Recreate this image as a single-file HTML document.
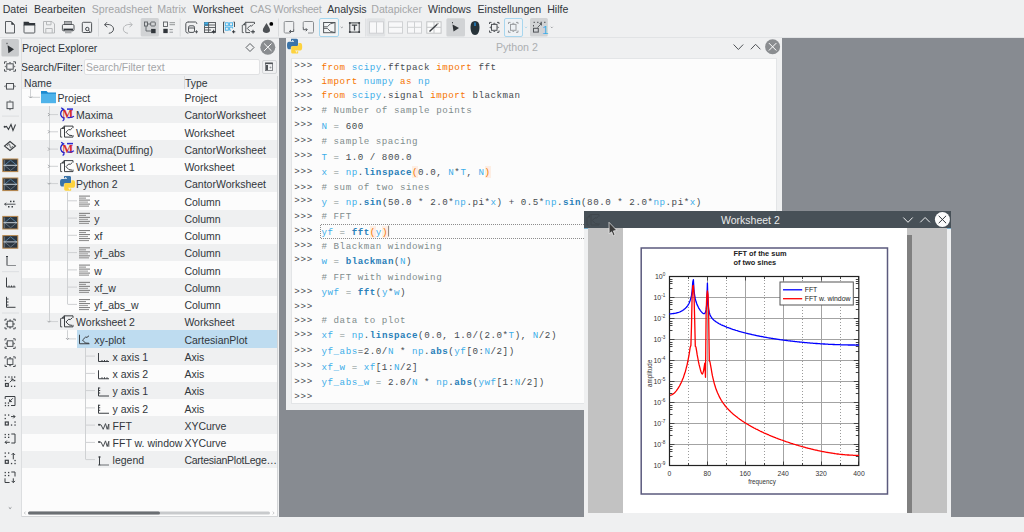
<!DOCTYPE html>
<html><head><meta charset="utf-8"><style>
*{margin:0;padding:0;box-sizing:border-box}
html,body{width:1024px;height:532px;overflow:hidden;background:#eff0f1;font-family:"Liberation Sans",sans-serif;color:#31363b}
.a{position:absolute}
.t{position:absolute;white-space:pre;line-height:1}
.m{font-size:10.6px}
.dis{color:#a4a6a8}
.code{font-family:"Liberation Mono",monospace;font-size:9.2px;letter-spacing:0.52px;white-space:pre;position:absolute;line-height:1}
.K{color:#f67400}
.V{color:#3daee9}
.F{color:#2980b9;font-weight:bold}
.C{color:#7f8c8d}
.O{color:#7f8c8d}
.D{color:#464b50}
.H{background:#fdeee4;padding-top:1px}
.tree{font-size:10.5px}
svg{position:absolute;overflow:visible}
</style></head>
<body>
<div class="t m" style="left:2.7px;top:4.2px;">Datei</div>
<div class="t m" style="left:34.1px;top:4.2px;">Bearbeiten</div>
<div class="t m dis" style="left:91.8px;top:4.2px;">Spreadsheet</div>
<div class="t m dis" style="left:157.2px;top:4.2px;">Matrix</div>
<div class="t m" style="left:193.0px;top:4.2px;">Worksheet</div>
<div class="t m dis" style="left:250.1px;top:4.2px;letter-spacing:-0.3px">CAS Worksheet</div>
<div class="t m" style="left:327.2px;top:4.2px;">Analysis</div>
<div class="t m dis" style="left:371.3px;top:4.2px;">Datapicker</div>
<div class="t m" style="left:428.1px;top:4.2px;">Windows</div>
<div class="t m" style="left:477.5px;top:4.2px;">Einstellungen</div>
<div class="t m" style="left:547.2px;top:4.2px;">Hilfe</div>
<div class="a" style="left:0;top:37px;width:1024px;height:1px;background:#e1e3e5"></div>
<div class="a" style="left:279px;top:38px;width:745px;height:479px;background:#878b91"></div>
<div class="a" style="left:286px;top:38px;width:496px;height:372px;background:#eff0f1"></div>
<div class="a" style="left:291px;top:58px;width:486px;height:346px;background:#fcfcfc;border:1px solid #e3e5e7"></div>
<div class="t" style="left:496px;top:42px;font-size:10.6px;color:#acafb2">Python 2</div>
<div class="code" style="left:294.2px;top:61.1px;color:#464b50;letter-spacing:0.75px">&gt;&gt;&gt;</div>
<div class="code D" style="left:321.5px;top:62.8px"><span class="K">from</span> <span class="V">scipy</span>.fftpack <span class="K">import</span> fft</div>
<div class="code" style="left:294.2px;top:76.7px;color:#464b50;letter-spacing:0.75px">&gt;&gt;&gt;</div>
<div class="code D" style="left:321.5px;top:76.9px"><span class="K">import</span> <span class="V">numpy</span> <span class="K">as</span> <span class="V">np</span></div>
<div class="code" style="left:294.2px;top:90.7px;color:#464b50;letter-spacing:0.75px">&gt;&gt;&gt;</div>
<div class="code D" style="left:321.5px;top:90.7px"><span class="K">from</span> <span class="V">scipy</span>.signal <span class="K">import</span> blackman</div>
<div class="code" style="left:294.2px;top:104.5px;color:#464b50;letter-spacing:0.75px">&gt;&gt;&gt;</div>
<div class="code D" style="left:321.5px;top:105.8px"><span class="C"># Number of sample points</span></div>
<div class="code" style="left:294.2px;top:119.6px;color:#464b50;letter-spacing:0.75px">&gt;&gt;&gt;</div>
<div class="code D" style="left:321.5px;top:121.5px"><span class="V">N</span><span class="O"> = </span>600</div>
<div class="code" style="left:294.2px;top:135.8px;color:#464b50;letter-spacing:0.75px">&gt;&gt;&gt;</div>
<div class="code D" style="left:321.5px;top:137.2px"><span class="C"># sample spacing</span></div>
<div class="code" style="left:294.2px;top:151.4px;color:#464b50;letter-spacing:0.75px">&gt;&gt;&gt;</div>
<div class="code D" style="left:321.5px;top:152.5px"><span class="V">T</span><span class="O"> = </span>1.0 / 800.0</div>
<div class="code" style="left:294.2px;top:167.0px;color:#464b50;letter-spacing:0.75px">&gt;&gt;&gt;</div>
<div class="code D" style="left:321.5px;top:168.4px"><span class="V">x</span><span class="O"> = </span><span class="V">np</span>.<span class="F">linspace</span><span class="K H">(</span>0.0, <span class="V">N</span>*<span class="V">T</span>, <span class="V">N</span><span class="K H">)</span></div>
<div class="code" style="left:294.2px;top:182.7px;color:#464b50;letter-spacing:0.75px">&gt;&gt;&gt;</div>
<div class="code D" style="left:321.5px;top:182.5px"><span class="C"># sum of two sines</span></div>
<div class="code" style="left:294.2px;top:196.4px;color:#464b50;letter-spacing:0.75px">&gt;&gt;&gt;</div>
<div class="code D" style="left:321.5px;top:197.5px"><span class="V">y</span><span class="O"> = </span><span class="V">np</span>.<span class="F">sin</span>(50.0 * 2.0*<span class="V">np</span>.pi*<span class="V">x</span>) + 0.5*<span class="V">np</span>.<span class="F">sin</span>(80.0 * 2.0*<span class="V">np</span>.pi*<span class="V">x</span>)</div>
<div class="code" style="left:294.2px;top:211.7px;color:#464b50;letter-spacing:0.75px">&gt;&gt;&gt;</div>
<div class="code D" style="left:321.5px;top:211.9px"><span class="C"># FFT</span></div>
<div class="code" style="left:294.2px;top:225.8px;color:#464b50;letter-spacing:0.75px">&gt;&gt;&gt;</div>
<div class="code D" style="left:321.5px;top:227.5px"><span class="V">yf</span><span class="O"> = </span><span class="F">fft</span><span class="K H">(</span><span class="V">y</span><span class="K H">)</span></div>
<div class="code" style="left:294.2px;top:241.4px;color:#464b50;letter-spacing:0.75px">&gt;&gt;&gt;</div>
<div class="code D" style="left:321.5px;top:241.6px"><span class="C"># Blackman windowing</span></div>
<div class="code" style="left:294.2px;top:255.0px;color:#464b50;letter-spacing:0.75px">&gt;&gt;&gt;</div>
<div class="code D" style="left:321.5px;top:256.9px"><span class="V">w</span><span class="O"> = </span><span class="F">blackman</span>(<span class="V">N</span>)</div>
<div class="code D" style="left:321.5px;top:272.5px"><span class="C"># FFT with windowing</span></div>
<div class="code" style="left:294.2px;top:286.7px;color:#464b50;letter-spacing:0.75px">&gt;&gt;&gt;</div>
<div class="code D" style="left:321.5px;top:287.6px"><span class="V">ywf</span><span class="O"> = </span><span class="F">fft</span>(<span class="V">y</span>*<span class="V">w</span>)</div>
<div class="code" style="left:294.2px;top:302.4px;color:#464b50;letter-spacing:0.75px">&gt;&gt;&gt;</div>
<div class="code" style="left:294.2px;top:315.9px;color:#464b50;letter-spacing:0.75px">&gt;&gt;&gt;</div>
<div class="code D" style="left:321.5px;top:315.8px"><span class="C"># data to plot</span></div>
<div class="code" style="left:294.2px;top:330.0px;color:#464b50;letter-spacing:0.75px">&gt;&gt;&gt;</div>
<div class="code D" style="left:321.5px;top:330.9px"><span class="V">xf</span><span class="O"> = </span><span class="V">np</span>.<span class="F">linspace</span>(0.0, 1.0/(2.0*<span class="V">T</span>), <span class="V">N</span>/2)</div>
<div class="code" style="left:294.2px;top:345.6px;color:#464b50;letter-spacing:0.75px">&gt;&gt;&gt;</div>
<div class="code D" style="left:321.5px;top:346.6px"><span class="V">yf_abs</span>=2.0/<span class="V">N</span> * <span class="V">np</span>.<span class="F">abs</span>(<span class="V">yf</span>[0:<span class="V">N</span>/2])</div>
<div class="code" style="left:294.2px;top:361.1px;color:#464b50;letter-spacing:0.75px">&gt;&gt;&gt;</div>
<div class="code D" style="left:321.5px;top:362.5px"><span class="V">xf_w</span><span class="O"> = </span><span class="V">xf</span>[1:<span class="V">N</span>/2]</div>
<div class="code" style="left:294.2px;top:376.7px;color:#464b50;letter-spacing:0.75px">&gt;&gt;&gt;</div>
<div class="code D" style="left:321.5px;top:378.1px"><span class="V">yf_abs_w</span><span class="O"> = </span>2.0/<span class="V">N</span> * <span class="V">np</span>.<span class="F">abs</span>(<span class="V">ywf</span>[1:<span class="V">N</span>/2])</div>
<div class="code" style="left:294.2px;top:392.4px;color:#464b50;letter-spacing:0.75px">&gt;&gt;&gt;</div>
<svg class="a" width="1024" height="532" style="left:0;top:0"><path d="M320.5,224.5 H600 M320.5,238.5 H600 M320.5,224.5 V238.5" stroke="#8d8d8d" stroke-width="1" stroke-dasharray="1,1" fill="none" shape-rendering="crispEdges"/><line x1="388.6" y1="225.7" x2="388.6" y2="236.6" stroke="#8a7f7a" stroke-width="1"/></svg>
<svg class="a" width="1024" height="532" style="left:0;top:0"><path d="M733.6,44.5 L738.4,49.5 L743.2,44.5" fill="none" stroke="#4f5357" stroke-width="1"/><path d="M750.8,49.3 L755.6,44.3 L760.4,49.3" fill="none" stroke="#4f5357" stroke-width="1"/><circle cx="772.6" cy="46.8" r="7.5" fill="#8a8d90"/><path d="M768.9,43.1 L776.3,50.5 M776.3,43.1 L768.9,50.5" stroke="#fff" stroke-width="1"/><g transform="translate(287.00,38.80)"><path d="M4.5,0 H9.5 C10.5,0 11,0.7 11,1.7 V6 C11,7 10.3,7.6 9.3,7.6 H5 C4,7.6 3.8,8.3 3.8,9 V10.5 H1.8 C0.5,10.5 0,9 0,6.5 C0,4 0.7,3 2,3 H7 V2.3 H4 V1.5 C4,0.5 4,0 4.5,0 Z" fill="#3a73a8"/><path d="M10.7,14.8 H5.7 C4.7,14.8 4.2,14.1 4.2,13.1 V8.8 C4.2,7.8 4.9,7.2 5.9,7.2 H10.2 C11.2,7.2 11.4,6.5 11.4,5.8 V4.3 H13.4 C14.7,4.3 15.2,5.8 15.2,8.3 C15.2,10.8 14.5,11.8 13.2,11.8 H8.2 V12.5 H11.2 V13.3 C11.2,14.3 11.2,14.8 10.7,14.8 Z" fill="#fdd23e"/><circle cx="5.7" cy="1.8" r="0.6" fill="#fff"/><circle cx="9.6" cy="13" r="0.6" fill="#fff"/></g></svg>
<div class="a" style="left:584px;top:211px;width:367px;height:306px;background:#eff0f1"></div>
<div class="a" style="left:584px;top:211px;width:367px;height:18px;background:#475057;border-bottom:1px solid #7db2cf"></div>
<div class="t" style="left:721px;top:214.5px;font-size:10.5px;color:#e8e9ea">Worksheet 2</div>
<div class="a" style="left:588px;top:228px;width:359px;height:285px;background:#c2c2c2"></div>
<div class="a" style="left:623px;top:228px;width:284px;height:285px;background:#ffffff"></div>
<div class="a" style="left:907px;top:235px;width:5px;height:278px;background:#808080"></div>
<svg class="a" width="1024" height="532" style="left:0;top:0"><path d="M903.3,217.5 L908,222.3 L912.7,217.5" fill="none" stroke="#eff0f1" stroke-width="1"/><path d="M920.3,222.3 L925.1,217.5 L929.9,222.3" fill="none" stroke="#eff0f1" stroke-width="1"/><circle cx="942.4" cy="219.5" r="7.5" fill="#fcfcfc"/><path d="M938.7,215.8 L946.1,223.2 M946.1,215.8 L938.7,223.2" stroke="#31363b" stroke-width="1"/><rect x="641.2" y="248" width="246.3" height="246" fill="none" stroke="#5b5a7d" stroke-width="1.5"/><line x1="669.3" y1="297.5" x2="859.0" y2="297.5" stroke="#a3a3a3" stroke-width="1"/><line x1="669.3" y1="318.5" x2="859.0" y2="318.5" stroke="#a3a3a3" stroke-width="1"/><line x1="669.3" y1="339.5" x2="859.0" y2="339.5" stroke="#a3a3a3" stroke-width="1"/><line x1="669.3" y1="360.5" x2="859.0" y2="360.5" stroke="#a3a3a3" stroke-width="1"/><line x1="669.3" y1="381.5" x2="859.0" y2="381.5" stroke="#a3a3a3" stroke-width="1"/><line x1="669.3" y1="402.5" x2="859.0" y2="402.5" stroke="#a3a3a3" stroke-width="1"/><line x1="669.3" y1="423.5" x2="859.0" y2="423.5" stroke="#a3a3a3" stroke-width="1"/><line x1="669.3" y1="444.5" x2="859.0" y2="444.5" stroke="#a3a3a3" stroke-width="1"/><line x1="688.5" y1="276.6" x2="688.5" y2="465.3" stroke="#9a9a9a" stroke-width="1" stroke-dasharray="1,2" shape-rendering="crispEdges"/><line x1="707.5" y1="276.6" x2="707.5" y2="465.3" stroke="#a3a3a3" stroke-width="1"/><line x1="726.5" y1="276.6" x2="726.5" y2="465.3" stroke="#9a9a9a" stroke-width="1" stroke-dasharray="1,2" shape-rendering="crispEdges"/><line x1="745.5" y1="276.6" x2="745.5" y2="465.3" stroke="#a3a3a3" stroke-width="1"/><line x1="764.5" y1="276.6" x2="764.5" y2="465.3" stroke="#9a9a9a" stroke-width="1" stroke-dasharray="1,2" shape-rendering="crispEdges"/><line x1="783.5" y1="276.6" x2="783.5" y2="465.3" stroke="#a3a3a3" stroke-width="1"/><line x1="802.5" y1="276.6" x2="802.5" y2="465.3" stroke="#9a9a9a" stroke-width="1" stroke-dasharray="1,2" shape-rendering="crispEdges"/><line x1="821.5" y1="276.6" x2="821.5" y2="465.3" stroke="#a3a3a3" stroke-width="1"/><line x1="840.5" y1="276.6" x2="840.5" y2="465.3" stroke="#9a9a9a" stroke-width="1" stroke-dasharray="1,2" shape-rendering="crispEdges"/><path d="M669.5,288.5 h3 M858.8,288.5 h-3 M669.5,283.5 h3 M858.8,283.5 h-3 M669.5,281.5 h3 M858.8,281.5 h-3 M669.5,279.5 h3 M858.8,279.5 h-3 M669.5,309.5 h3 M858.8,309.5 h-3 M669.5,304.5 h3 M858.8,304.5 h-3 M669.5,302.5 h3 M858.8,302.5 h-3 M669.5,300.5 h3 M858.8,300.5 h-3 M669.5,330.5 h3 M858.8,330.5 h-3 M669.5,325.5 h3 M858.8,325.5 h-3 M669.5,323.5 h3 M858.8,323.5 h-3 M669.5,321.5 h3 M858.8,321.5 h-3 M669.5,351.5 h3 M858.8,351.5 h-3 M669.5,346.5 h3 M858.8,346.5 h-3 M669.5,344.5 h3 M858.8,344.5 h-3 M669.5,342.5 h3 M858.8,342.5 h-3 M669.5,372.5 h3 M858.8,372.5 h-3 M669.5,367.5 h3 M858.8,367.5 h-3 M669.5,365.5 h3 M858.8,365.5 h-3 M669.5,363.5 h3 M858.8,363.5 h-3 M669.5,393.5 h3 M858.8,393.5 h-3 M669.5,388.5 h3 M858.8,388.5 h-3 M669.5,386.5 h3 M858.8,386.5 h-3 M669.5,384.5 h3 M858.8,384.5 h-3 M669.5,414.5 h3 M858.8,414.5 h-3 M669.5,409.5 h3 M858.8,409.5 h-3 M669.5,407.5 h3 M858.8,407.5 h-3 M669.5,405.5 h3 M858.8,405.5 h-3 M669.5,435.5 h3 M858.8,435.5 h-3 M669.5,430.5 h3 M858.8,430.5 h-3 M669.5,428.5 h3 M858.8,428.5 h-3 M669.5,426.5 h3 M858.8,426.5 h-3 M669.5,456.5 h3 M858.8,456.5 h-3 M669.5,451.5 h3 M858.8,451.5 h-3 M669.5,449.5 h3 M858.8,449.5 h-3 M669.5,446.5 h3 M858.8,446.5 h-3 M669.5,276.5 h5 M858.8,276.5 h-5 M669.5,297.5 h5 M858.8,297.5 h-5 M669.5,318.5 h5 M858.8,318.5 h-5 M669.5,339.5 h5 M858.8,339.5 h-5 M669.5,360.5 h5 M858.8,360.5 h-5 M669.5,381.5 h5 M858.8,381.5 h-5 M669.5,402.5 h5 M858.8,402.5 h-5 M669.5,423.5 h5 M858.8,423.5 h-5 M669.5,444.5 h5 M858.8,444.5 h-5 M669.5,465.5 h5 M858.8,465.5 h-5 M669.5,465.5 v-4 M669.5,276.5 v4 M688.5,465.5 v-2.5 M688.5,276.5 v2.5 M707.5,465.5 v-4 M707.5,276.5 v4 M726.5,465.5 v-2.5 M726.5,276.5 v2.5 M745.5,465.5 v-4 M745.5,276.5 v4 M764.5,465.5 v-2.5 M764.5,276.5 v2.5 M783.5,465.5 v-4 M783.5,276.5 v4 M802.5,465.5 v-2.5 M802.5,276.5 v2.5 M821.5,465.5 v-4 M821.5,276.5 v4 M840.5,465.5 v-2.5 M840.5,276.5 v2.5 M858.5,465.5 v-4 M858.5,276.5 v4" stroke="#444" stroke-width="1" fill="none"/><rect x="669.5" y="276.5" width="189.3" height="189" fill="none" stroke="#222" stroke-width="1.2"/><path d="M669.3,313.8 L669.9,313.8 L670.6,313.8 L671.2,313.8 L671.8,313.7 L672.5,313.7 L673.1,313.6 L673.7,313.5 L674.4,313.4 L675.0,313.3 L675.6,313.2 L676.3,313.0 L676.9,312.9 L677.5,312.7 L678.2,312.5 L678.8,312.3 L679.5,312.0 L680.1,311.8 L680.7,311.5 L681.4,311.2 L682.0,310.8 L682.6,310.5 L683.3,310.0 L683.9,309.6 L684.5,309.1 L685.2,308.5 L685.8,307.9 L686.4,307.3 L687.1,306.5 L687.7,305.6 L688.3,304.6 L689.0,303.5 L689.6,302.1 L690.2,300.4 L690.9,298.3 L691.5,295.4 L692.1,291.1 L692.8,281.9 L693.4,279.7 L694.0,290.7 L694.7,295.6 L695.3,298.9 L695.9,301.3 L696.6,303.3 L697.2,304.9 L697.9,306.3 L698.5,307.6 L699.1,308.7 L699.8,309.7 L700.4,310.6 L701.0,311.4 L701.7,312.1 L702.3,312.7 L702.9,313.2 L703.6,313.6 L704.2,313.6 L704.8,313.3 L705.5,312.2 L706.1,309.9 L706.7,304.7 L707.4,283.1 L708.0,302.8 L708.6,309.1 L709.3,312.4 L709.9,314.5 L710.5,315.9 L711.2,317.0 L711.8,318.0 L712.4,318.7 L713.1,319.4 L713.7,320.0 L714.3,320.5 L715.0,321.0 L715.6,321.5 L716.2,321.9 L716.9,322.3 L717.5,322.7 L718.2,323.1 L718.8,323.5 L719.4,323.8 L720.1,324.1 L720.7,324.5 L721.3,324.8 L722.0,325.1 L722.6,325.4 L723.2,325.7 L723.9,325.9 L724.5,326.2 L725.1,326.5 L725.8,326.7 L726.4,327.0 L727.0,327.3 L727.7,327.5 L728.3,327.7 L728.9,328.0 L729.6,328.2 L730.2,328.4 L730.8,328.7 L731.5,328.9 L732.1,329.1 L732.7,329.3 L733.4,329.5 L734.0,329.7 L734.6,329.9 L735.3,330.1 L735.9,330.3 L736.6,330.5 L737.2,330.7 L737.8,330.9 L738.5,331.1 L739.1,331.3 L739.7,331.5 L740.4,331.7 L741.0,331.8 L741.6,332.0 L742.3,332.2 L742.9,332.3 L743.5,332.5 L744.2,332.7 L744.8,332.8 L745.4,333.0 L746.1,333.2 L746.7,333.3 L747.3,333.5 L748.0,333.6 L748.6,333.8 L749.2,333.9 L749.9,334.1 L750.5,334.2 L751.1,334.4 L751.8,334.5 L752.4,334.7 L753.0,334.8 L753.7,334.9 L754.3,335.1 L755.0,335.2 L755.6,335.4 L756.2,335.5 L756.9,335.6 L757.5,335.8 L758.1,335.9 L758.8,336.0 L759.4,336.1 L760.0,336.3 L760.7,336.4 L761.3,336.5 L761.9,336.6 L762.6,336.7 L763.2,336.9 L763.8,337.0 L764.5,337.1 L765.1,337.2 L765.7,337.3 L766.4,337.4 L767.0,337.6 L767.6,337.7 L768.3,337.8 L768.9,337.9 L769.5,338.0 L770.2,338.1 L770.8,338.2 L771.4,338.3 L772.1,338.4 L772.7,338.5 L773.3,338.6 L774.0,338.7 L774.6,338.8 L775.3,338.9 L775.9,339.0 L776.5,339.1 L777.2,339.2 L777.8,339.3 L778.4,339.4 L779.1,339.5 L779.7,339.6 L780.3,339.7 L781.0,339.8 L781.6,339.8 L782.2,339.9 L782.9,340.0 L783.5,340.1 L784.1,340.2 L784.8,340.3 L785.4,340.4 L786.0,340.4 L786.7,340.5 L787.3,340.6 L787.9,340.7 L788.6,340.8 L789.2,340.8 L789.8,340.9 L790.5,341.0 L791.1,341.1 L791.7,341.1 L792.4,341.2 L793.0,341.3 L793.7,341.4 L794.3,341.4 L794.9,341.5 L795.6,341.6 L796.2,341.7 L796.8,341.7 L797.5,341.8 L798.1,341.9 L798.7,341.9 L799.4,342.0 L800.0,342.1 L800.6,342.1 L801.3,342.2 L801.9,342.2 L802.5,342.3 L803.2,342.4 L803.8,342.4 L804.4,342.5 L805.1,342.6 L805.7,342.6 L806.3,342.7 L807.0,342.7 L807.6,342.8 L808.2,342.8 L808.9,342.9 L809.5,342.9 L810.1,343.0 L810.8,343.1 L811.4,343.1 L812.1,343.2 L812.7,343.2 L813.3,343.3 L814.0,343.3 L814.6,343.4 L815.2,343.4 L815.9,343.5 L816.5,343.5 L817.1,343.5 L817.8,343.6 L818.4,343.6 L819.0,343.7 L819.7,343.7 L820.3,343.8 L820.9,343.8 L821.6,343.8 L822.2,343.9 L822.8,343.9 L823.5,344.0 L824.1,344.0 L824.7,344.0 L825.4,344.1 L826.0,344.1 L826.6,344.2 L827.3,344.2 L827.9,344.2 L828.5,344.3 L829.2,344.3 L829.8,344.3 L830.4,344.4 L831.1,344.4 L831.7,344.4 L832.4,344.4 L833.0,344.5 L833.6,344.5 L834.3,344.5 L834.9,344.6 L835.5,344.6 L836.2,344.6 L836.8,344.6 L837.4,344.7 L838.1,344.7 L838.7,344.7 L839.3,344.7 L840.0,344.7 L840.6,344.8 L841.2,344.8 L841.9,344.8 L842.5,344.8 L843.1,344.8 L843.8,344.9 L844.4,344.9 L845.0,344.9 L845.7,344.9 L846.3,344.9 L846.9,344.9 L847.6,344.9 L848.2,345.0 L848.8,345.0 L849.5,345.0 L850.1,345.0 L850.8,345.0 L851.4,345.0 L852.0,345.0 L852.7,345.0 L853.3,345.0 L853.9,345.0 L854.6,345.0 L855.2,345.1 L855.8,345.1 L856.5,345.1 L857.1,345.1 L857.7,345.1 L858.4,345.1 L859.0,345.1" fill="none" stroke="#0000ff" stroke-width="1.3" stroke-linejoin="round"/><path d="M669.9,395.3 L670.6,395.2 L671.2,395.0 L671.8,394.8 L672.5,394.4 L673.1,394.0 L673.7,393.5 L674.4,393.0 L675.0,392.3 L675.6,391.6 L676.3,390.9 L676.9,390.0 L677.5,389.2 L678.2,388.2 L678.8,387.1 L679.5,386.0 L680.1,384.9 L680.7,383.6 L681.4,382.2 L682.0,380.8 L682.6,379.3 L683.3,377.7 L683.9,375.9 L684.5,374.0 L685.2,372.0 L685.8,369.8 L686.4,367.4 L687.1,364.8 L687.7,362.0 L688.3,358.8 L689.0,355.2 L689.6,351.3 L690.2,347.2 L690.9,345.4 L691.5,326.1 L692.1,296.6 L692.8,286.0 L693.4,285.4 L694.0,294.6 L694.7,320.2 L695.3,346.3 L695.9,346.9 L696.6,350.9 L697.2,354.9 L697.9,358.5 L698.5,361.8 L699.1,364.7 L699.8,367.3 L700.4,369.7 L701.0,371.8 L701.7,373.4 L702.3,374.1 L702.9,373.2 L703.6,370.6 L704.2,366.9 L704.8,363.1 L705.5,377.3 L706.1,314.9 L706.7,296.6 L707.4,290.9 L708.0,294.6 L708.6,309.7 L709.3,361.0 L709.9,361.5 L710.5,364.8 L711.2,368.7 L711.8,372.4 L712.4,375.7 L713.1,378.6 L713.7,381.2 L714.3,383.6 L715.0,385.8 L715.6,387.8 L716.2,389.6 L716.9,391.3 L717.5,392.8 L718.2,394.3 L718.8,395.6 L719.4,396.9 L720.1,398.1 L720.7,399.2 L721.3,400.3 L722.0,401.3 L722.6,402.3 L723.2,403.2 L723.9,404.1 L724.5,404.9 L725.1,405.8 L725.8,406.5 L726.4,407.3 L727.0,408.0 L727.7,408.7 L728.3,409.4 L728.9,410.1 L729.6,410.7 L730.2,411.3 L730.8,411.9 L731.5,412.5 L732.1,413.1 L732.7,413.7 L733.4,414.2 L734.0,414.8 L734.6,415.3 L735.3,415.8 L735.9,416.3 L736.6,416.8 L737.2,417.3 L737.8,417.8 L738.5,418.3 L739.1,418.7 L739.7,419.2 L740.4,419.6 L741.0,420.1 L741.6,420.5 L742.3,421.0 L742.9,421.4 L743.5,421.8 L744.2,422.2 L744.8,422.6 L745.4,423.0 L746.1,423.4 L746.7,423.8 L747.3,424.2 L748.0,424.5 L748.6,424.9 L749.2,425.3 L749.9,425.7 L750.5,426.0 L751.1,426.4 L751.8,426.7 L752.4,427.1 L753.0,427.4 L753.7,427.8 L754.3,428.1 L755.0,428.4 L755.6,428.8 L756.2,429.1 L756.9,429.4 L757.5,429.7 L758.1,430.0 L758.8,430.4 L759.4,430.7 L760.0,431.0 L760.7,431.3 L761.3,431.6 L761.9,431.9 L762.6,432.2 L763.2,432.5 L763.8,432.8 L764.5,433.1 L765.1,433.3 L765.7,433.6 L766.4,433.9 L767.0,434.2 L767.6,434.5 L768.3,434.7 L768.9,435.0 L769.5,435.3 L770.2,435.5 L770.8,435.8 L771.4,436.1 L772.1,436.3 L772.7,436.6 L773.3,436.8 L774.0,437.1 L774.6,437.4 L775.3,437.6 L775.9,437.9 L776.5,438.1 L777.2,438.3 L777.8,438.6 L778.4,438.8 L779.1,439.1 L779.7,439.3 L780.3,439.5 L781.0,439.8 L781.6,440.0 L782.2,440.2 L782.9,440.5 L783.5,440.7 L784.1,440.9 L784.8,441.1 L785.4,441.4 L786.0,441.6 L786.7,441.8 L787.3,442.0 L787.9,442.2 L788.6,442.4 L789.2,442.6 L789.8,442.9 L790.5,443.1 L791.1,443.3 L791.7,443.5 L792.4,443.7 L793.0,443.9 L793.7,444.1 L794.3,444.3 L794.9,444.5 L795.6,444.7 L796.2,444.9 L796.8,445.1 L797.5,445.2 L798.1,445.4 L798.7,445.6 L799.4,445.8 L800.0,446.0 L800.6,446.2 L801.3,446.4 L801.9,446.5 L802.5,446.7 L803.2,446.9 L803.8,447.1 L804.4,447.2 L805.1,447.4 L805.7,447.6 L806.3,447.8 L807.0,447.9 L807.6,448.1 L808.2,448.3 L808.9,448.4 L809.5,448.6 L810.1,448.7 L810.8,448.9 L811.4,449.1 L812.1,449.2 L812.7,449.4 L813.3,449.5 L814.0,449.7 L814.6,449.8 L815.2,450.0 L815.9,450.1 L816.5,450.2 L817.1,450.4 L817.8,450.5 L818.4,450.7 L819.0,450.8 L819.7,450.9 L820.3,451.1 L820.9,451.2 L821.6,451.3 L822.2,451.5 L822.8,451.6 L823.5,451.7 L824.1,451.8 L824.7,451.9 L825.4,452.1 L826.0,452.2 L826.6,452.3 L827.3,452.4 L827.9,452.5 L828.5,452.6 L829.2,452.7 L829.8,452.8 L830.4,452.9 L831.1,453.0 L831.7,453.1 L832.4,453.2 L833.0,453.3 L833.6,453.4 L834.3,453.5 L834.9,453.6 L835.5,453.7 L836.2,453.8 L836.8,453.9 L837.4,454.0 L838.1,454.0 L838.7,454.1 L839.3,454.2 L840.0,454.3 L840.6,454.3 L841.2,454.4 L841.9,454.5 L842.5,454.5 L843.1,454.6 L843.8,454.6 L844.4,454.7 L845.0,454.8 L845.7,454.8 L846.3,454.9 L846.9,454.9 L847.6,455.0 L848.2,455.0 L848.8,455.0 L849.5,455.1 L850.1,455.1 L850.8,455.2 L851.4,455.2 L852.0,455.2 L852.7,455.2 L853.3,455.3 L853.9,455.3 L854.6,455.3 L855.2,455.3 L855.8,455.3 L856.5,455.4 L857.1,455.4 L857.7,455.4 L858.4,455.4 L859.0,455.4" fill="none" stroke="#ff0000" stroke-width="1.3" stroke-linejoin="round"/><text x="665.3" y="279.2" text-anchor="end" font-family="Liberation Sans" font-size="7" fill="#333"><tspan>10</tspan><tspan dy="-2.8" font-size="4.6">0</tspan></text><text x="665.3" y="300.2" text-anchor="end" font-family="Liberation Sans" font-size="7" fill="#333"><tspan>10</tspan><tspan dy="-2.8" font-size="4.6">-1</tspan></text><text x="665.3" y="321.1" text-anchor="end" font-family="Liberation Sans" font-size="7" fill="#333"><tspan>10</tspan><tspan dy="-2.8" font-size="4.6">-2</tspan></text><text x="665.3" y="342.1" text-anchor="end" font-family="Liberation Sans" font-size="7" fill="#333"><tspan>10</tspan><tspan dy="-2.8" font-size="4.6">-3</tspan></text><text x="665.3" y="363.1" text-anchor="end" font-family="Liberation Sans" font-size="7" fill="#333"><tspan>10</tspan><tspan dy="-2.8" font-size="4.6">-4</tspan></text><text x="665.3" y="384.0" text-anchor="end" font-family="Liberation Sans" font-size="7" fill="#333"><tspan>10</tspan><tspan dy="-2.8" font-size="4.6">-5</tspan></text><text x="665.3" y="405.0" text-anchor="end" font-family="Liberation Sans" font-size="7" fill="#333"><tspan>10</tspan><tspan dy="-2.8" font-size="4.6">-6</tspan></text><text x="665.3" y="426.0" text-anchor="end" font-family="Liberation Sans" font-size="7" fill="#333"><tspan>10</tspan><tspan dy="-2.8" font-size="4.6">-7</tspan></text><text x="665.3" y="446.9" text-anchor="end" font-family="Liberation Sans" font-size="7" fill="#333"><tspan>10</tspan><tspan dy="-2.8" font-size="4.6">-8</tspan></text><text x="665.3" y="467.9" text-anchor="end" font-family="Liberation Sans" font-size="7" fill="#333"><tspan>10</tspan><tspan dy="-2.8" font-size="4.6">-9</tspan></text><text x="669.3" y="476" text-anchor="middle" font-family="Liberation Sans" font-size="6.8" fill="#333">0</text><text x="707.2" y="476" text-anchor="middle" font-family="Liberation Sans" font-size="6.8" fill="#333">80</text><text x="745.2" y="476" text-anchor="middle" font-family="Liberation Sans" font-size="6.8" fill="#333">160</text><text x="783.1" y="476" text-anchor="middle" font-family="Liberation Sans" font-size="6.8" fill="#333">240</text><text x="821.1" y="476" text-anchor="middle" font-family="Liberation Sans" font-size="6.8" fill="#333">320</text><text x="859.0" y="476" text-anchor="middle" font-family="Liberation Sans" font-size="6.8" fill="#333">400</text><text x="762" y="484" text-anchor="middle" font-family="Liberation Sans" font-size="6.3" fill="#333">frequency</text><text transform="translate(651.7,373.3) rotate(-90)" text-anchor="middle" font-family="Liberation Sans" font-size="6.3" fill="#333">amplitude</text><text x="733.5" y="255.5" font-family="Liberation Sans" font-weight="bold" font-size="7.4" fill="#222">FFT of the sum</text><text x="733.5" y="265.1" font-family="Liberation Sans" font-weight="bold" font-size="7.4" fill="#222">of two sines</text><rect x="780" y="282" width="73.3" height="23" fill="#fff" stroke="#555" stroke-width="1"/><line x1="783" y1="289.8" x2="802.2" y2="289.8" stroke="#0000ff" stroke-width="1.3"/><line x1="783" y1="298.7" x2="802.2" y2="298.7" stroke="#ff0000" stroke-width="1.3"/><text x="804.7" y="292" font-family="Liberation Sans" font-size="6.9" fill="#222">FFT</text><text x="804.7" y="301" font-family="Liberation Sans" font-size="6.9" fill="#222">FFT w. window</text><path d="M609,222.3 L616.8,230.4 L613.4,230.9 L615,235 L613.3,235.8 L611.6,231.8 L609.2,233.8 Z" fill="#3a3a3a" stroke="#f0f0f0" stroke-width="0.7" stroke-linejoin="round"/><g opacity="0.2"><path d="M587,217.5 L590,214.5 V217.5 Z" fill="#222"/><path d="M587,217.3 V225 H588.5 M590.3,214.5 H599 V216.5 M591,214.5 V225 H599 V223" fill="none" stroke="#222"/><path d="M598.3,216.5 L596.5,218 L595,217.8 L592.3,220.5 L595.3,223.5 L598,224" fill="none" stroke="#222"/></g></svg>
<div class="a" style="left:0;top:517px;width:1024px;height:15px;background:#eff0f1"></div>
<div class="t" style="left:22px;top:43.3px;font-size:10.6px">Project Explorer</div>
<div class="t" style="left:21px;top:62.5px;font-size:10.4px">Search/Filter:</div>
<div class="a" style="left:84px;top:58.6px;width:176.3px;height:16.4px;background:#fcfcfc;border:1px solid #e0e1e3;border-radius:2px"></div>
<div class="t" style="left:86px;top:63px;font-size:10.4px;color:#a4a6a8">Search/Filter text</div>
<div class="a" style="left:261.5px;top:59.5px;width:15.5px;height:14px;background:#eff0f1;border:1px solid #d5d7d9;border-radius:2px"></div>
<div class="a" style="left:21px;top:76px;width:257px;height:441px;background:#fcfcfc;border:1px solid #d3d5d7"></div>
<div class="a" style="left:22px;top:76px;width:255px;height:12.7px;background:#eff0f1"></div>
<div class="a" style="left:183.5px;top:76px;width:1px;height:12.7px;background:#d8dadc"></div>
<div class="t" style="left:24px;top:79.3px;font-size:10.4px">Name</div>
<div class="t" style="left:185px;top:79.3px;font-size:10.4px">Type</div>
<div class="a" style="left:22px;top:106px;width:255px;height:17px;background:#eff0f1"></div>
<div class="a" style="left:22px;top:140px;width:255px;height:18px;background:#eff0f1"></div>
<div class="a" style="left:22px;top:175px;width:255px;height:17px;background:#eff0f1"></div>
<div class="a" style="left:22px;top:210px;width:255px;height:17px;background:#eff0f1"></div>
<div class="a" style="left:22px;top:244px;width:255px;height:17px;background:#eff0f1"></div>
<div class="a" style="left:22px;top:278px;width:255px;height:18px;background:#eff0f1"></div>
<div class="a" style="left:22px;top:313px;width:255px;height:17px;background:#eff0f1"></div>
<div class="a" style="left:76.5px;top:330px;width:200.5px;height:18px;background:#bedcf0"></div>
<div class="a" style="left:22px;top:348px;width:255px;height:17px;background:#eff0f1"></div>
<div class="a" style="left:22px;top:382px;width:255px;height:17px;background:#eff0f1"></div>
<div class="a" style="left:22px;top:416px;width:255px;height:18px;background:#eff0f1"></div>
<div class="a" style="left:22px;top:451px;width:255px;height:17px;background:#eff0f1"></div>
<div class="t tree" style="left:57.6px;top:93.0px">Project</div>
<div class="t tree" style="left:184.4px;top:93.0px;">Project</div>
<div class="t tree" style="left:76.1px;top:110.3px">Maxima</div>
<div class="t tree" style="left:184.4px;top:110.3px;">CantorWorksheet</div>
<div class="t tree" style="left:76.1px;top:127.5px">Worksheet</div>
<div class="t tree" style="left:184.4px;top:127.5px;">Worksheet</div>
<div class="t tree" style="left:76.1px;top:144.8px">Maxima(Duffing)</div>
<div class="t tree" style="left:184.4px;top:144.8px;">CantorWorksheet</div>
<div class="t tree" style="left:76.1px;top:162.1px">Worksheet 1</div>
<div class="t tree" style="left:184.4px;top:162.1px;">Worksheet</div>
<div class="t tree" style="left:76.1px;top:179.3px">Python 2</div>
<div class="t tree" style="left:184.4px;top:179.3px;">CantorWorksheet</div>
<div class="t tree" style="left:94.2px;top:196.6px">x</div>
<div class="t tree" style="left:184.4px;top:196.6px;">Column</div>
<div class="t tree" style="left:94.2px;top:213.8px">y</div>
<div class="t tree" style="left:184.4px;top:213.8px;">Column</div>
<div class="t tree" style="left:94.2px;top:231.1px">xf</div>
<div class="t tree" style="left:184.4px;top:231.1px;">Column</div>
<div class="t tree" style="left:94.2px;top:248.3px">yf_abs</div>
<div class="t tree" style="left:184.4px;top:248.3px;">Column</div>
<div class="t tree" style="left:94.2px;top:265.6px">w</div>
<div class="t tree" style="left:184.4px;top:265.6px;">Column</div>
<div class="t tree" style="left:94.2px;top:282.8px">xf_w</div>
<div class="t tree" style="left:184.4px;top:282.8px;">Column</div>
<div class="t tree" style="left:94.2px;top:300.1px">yf_abs_w</div>
<div class="t tree" style="left:184.4px;top:300.1px;">Column</div>
<div class="t tree" style="left:76.1px;top:317.3px">Worksheet 2</div>
<div class="t tree" style="left:184.4px;top:317.3px;">Worksheet</div>
<div class="t tree" style="left:94.2px;top:334.6px">xy-plot</div>
<div class="t tree" style="left:184.4px;top:334.6px;">CartesianPlot</div>
<div class="t tree" style="left:112.6px;top:351.8px">x axis 1</div>
<div class="t tree" style="left:184.4px;top:351.8px;">Axis</div>
<div class="t tree" style="left:112.6px;top:369.1px">x axis 2</div>
<div class="t tree" style="left:184.4px;top:369.1px;">Axis</div>
<div class="t tree" style="left:112.6px;top:386.3px">y axis 1</div>
<div class="t tree" style="left:184.4px;top:386.3px;">Axis</div>
<div class="t tree" style="left:112.6px;top:403.6px">y axis 2</div>
<div class="t tree" style="left:184.4px;top:403.6px;">Axis</div>
<div class="t tree" style="left:112.6px;top:420.8px">FFT</div>
<div class="t tree" style="left:184.4px;top:420.8px;">XYCurve</div>
<div class="t tree" style="left:112.6px;top:438.1px">FFT w. window</div>
<div class="t tree" style="left:184.4px;top:438.1px;">XYCurve</div>
<div class="t tree" style="left:112.6px;top:455.3px">legend</div>
<div class="t tree" style="left:184.4px;top:455.3px;letter-spacing:-0.25px">CartesianPlotLege…</div>
<svg class="a" width="1024" height="532" style="left:0;top:0"><g transform="translate(41.00,89.90)"><path d="M0,1 H5.5 L7,2.5 H15 V4.5 H0 Z" fill="#1b8ad0"/><rect x="0" y="3.8" width="15" height="9.5" fill="#4fb3ea"/></g><g transform="translate(60.00,107.50)"><text x="2.2" y="10.8" font-family="Liberation Serif" font-weight="bold" font-size="11.5" fill="#d42a2a">M</text><path d="M1.2,0.3 L3.6,1.9 C1.3,3 0.4,5 0.8,7.4 C1.2,9.8 3,10.3 4,10.8 C4.2,12 3.6,13 2.6,13.4" fill="none" stroke="#2222cc" stroke-width="1.3"/><path d="M7,1.6 H13" stroke="#2a2ad0" stroke-width="1.5"/><path d="M7.5,10 C10,10.3 12,10.2 14,8.8" fill="none" stroke="#2a2ad0" stroke-width="1.3"/></g><g transform="translate(60.00,125.60)"><path d="M0.6,3.3 L3.9,0.3 V3.3 Z" fill="#3b3f43"/><path d="M0.6,3 V11.5 H2.2" fill="none" stroke="#3b3f43" stroke-width="0.9"/><path d="M3.8,0.5 H13 V2.5 M4.5,0.5 V11.5 H13 V9.5" fill="none" stroke="#3b3f43"/><path d="M12.2,2.5 L10.3,4.2 L8.7,3.9 L6,6.6 L9,9.6 L12,10" fill="none" stroke="#3b3f43" stroke-width="1"/></g><g transform="translate(60.00,142.00)"><text x="2.2" y="10.8" font-family="Liberation Serif" font-weight="bold" font-size="11.5" fill="#d42a2a">M</text><path d="M1.2,0.3 L3.6,1.9 C1.3,3 0.4,5 0.8,7.4 C1.2,9.8 3,10.3 4,10.8 C4.2,12 3.6,13 2.6,13.4" fill="none" stroke="#2222cc" stroke-width="1.3"/><path d="M7,1.6 H13" stroke="#2a2ad0" stroke-width="1.5"/><path d="M7.5,10 C10,10.3 12,10.2 14,8.8" fill="none" stroke="#2a2ad0" stroke-width="1.3"/></g><g transform="translate(60.00,160.10)"><path d="M0.6,3.3 L3.9,0.3 V3.3 Z" fill="#3b3f43"/><path d="M0.6,3 V11.5 H2.2" fill="none" stroke="#3b3f43" stroke-width="0.9"/><path d="M3.8,0.5 H13 V2.5 M4.5,0.5 V11.5 H13 V9.5" fill="none" stroke="#3b3f43"/><path d="M12.2,2.5 L10.3,4.2 L8.7,3.9 L6,6.6 L9,9.6 L12,10" fill="none" stroke="#3b3f43" stroke-width="1"/></g><g transform="translate(60.00,175.90)"><path d="M4.5,0 H9.5 C10.5,0 11,0.7 11,1.7 V6 C11,7 10.3,7.6 9.3,7.6 H5 C4,7.6 3.8,8.3 3.8,9 V10.5 H1.8 C0.5,10.5 0,9 0,6.5 C0,4 0.7,3 2,3 H7 V2.3 H4 V1.5 C4,0.5 4,0 4.5,0 Z" fill="#3a73a8"/><path d="M10.7,14.8 H5.7 C4.7,14.8 4.2,14.1 4.2,13.1 V8.8 C4.2,7.8 4.9,7.2 5.9,7.2 H10.2 C11.2,7.2 11.4,6.5 11.4,5.8 V4.3 H13.4 C14.7,4.3 15.2,5.8 15.2,8.3 C15.2,10.8 14.5,11.8 13.2,11.8 H8.2 V12.5 H11.2 V13.3 C11.2,14.3 11.2,14.8 10.7,14.8 Z" fill="#fdd23e"/><circle cx="5.7" cy="1.8" r="0.6" fill="#fff"/><circle cx="9.6" cy="13" r="0.6" fill="#fff"/></g><g transform="translate(79.00,195.60)"><line x1="0" y1="0.5" x2="11" y2="0.5" stroke="#777" stroke-width="1"/><line x1="0" y1="2.5" x2="7" y2="2.5" stroke="#888" stroke-width="1"/><line x1="0" y1="4.5" x2="11" y2="4.5" stroke="#777" stroke-width="1"/><line x1="0" y1="6.5" x2="9" y2="6.5" stroke="#999" stroke-width="1"/><line x1="0" y1="8.5" x2="11" y2="8.5" stroke="#777" stroke-width="1"/><line x1="0" y1="10.5" x2="10" y2="10.5" stroke="#888" stroke-width="1"/></g><g transform="translate(79.00,212.85)"><line x1="0" y1="0.5" x2="11" y2="0.5" stroke="#777" stroke-width="1"/><line x1="0" y1="2.5" x2="7" y2="2.5" stroke="#888" stroke-width="1"/><line x1="0" y1="4.5" x2="11" y2="4.5" stroke="#777" stroke-width="1"/><line x1="0" y1="6.5" x2="9" y2="6.5" stroke="#999" stroke-width="1"/><line x1="0" y1="8.5" x2="11" y2="8.5" stroke="#777" stroke-width="1"/><line x1="0" y1="10.5" x2="10" y2="10.5" stroke="#888" stroke-width="1"/></g><g transform="translate(79.00,230.10)"><line x1="0" y1="0.5" x2="11" y2="0.5" stroke="#777" stroke-width="1"/><line x1="0" y1="2.5" x2="7" y2="2.5" stroke="#888" stroke-width="1"/><line x1="0" y1="4.5" x2="11" y2="4.5" stroke="#777" stroke-width="1"/><line x1="0" y1="6.5" x2="9" y2="6.5" stroke="#999" stroke-width="1"/><line x1="0" y1="8.5" x2="11" y2="8.5" stroke="#777" stroke-width="1"/><line x1="0" y1="10.5" x2="10" y2="10.5" stroke="#888" stroke-width="1"/></g><g transform="translate(79.00,247.35)"><line x1="0" y1="0.5" x2="11" y2="0.5" stroke="#777" stroke-width="1"/><line x1="0" y1="2.5" x2="7" y2="2.5" stroke="#888" stroke-width="1"/><line x1="0" y1="4.5" x2="11" y2="4.5" stroke="#777" stroke-width="1"/><line x1="0" y1="6.5" x2="9" y2="6.5" stroke="#999" stroke-width="1"/><line x1="0" y1="8.5" x2="11" y2="8.5" stroke="#777" stroke-width="1"/><line x1="0" y1="10.5" x2="10" y2="10.5" stroke="#888" stroke-width="1"/></g><g transform="translate(79.00,264.60)"><line x1="0" y1="0.5" x2="11" y2="0.5" stroke="#777" stroke-width="1"/><line x1="0" y1="2.5" x2="7" y2="2.5" stroke="#888" stroke-width="1"/><line x1="0" y1="4.5" x2="11" y2="4.5" stroke="#777" stroke-width="1"/><line x1="0" y1="6.5" x2="9" y2="6.5" stroke="#999" stroke-width="1"/><line x1="0" y1="8.5" x2="11" y2="8.5" stroke="#777" stroke-width="1"/><line x1="0" y1="10.5" x2="10" y2="10.5" stroke="#888" stroke-width="1"/></g><g transform="translate(79.00,281.85)"><line x1="0" y1="0.5" x2="11" y2="0.5" stroke="#777" stroke-width="1"/><line x1="0" y1="2.5" x2="7" y2="2.5" stroke="#888" stroke-width="1"/><line x1="0" y1="4.5" x2="11" y2="4.5" stroke="#777" stroke-width="1"/><line x1="0" y1="6.5" x2="9" y2="6.5" stroke="#999" stroke-width="1"/><line x1="0" y1="8.5" x2="11" y2="8.5" stroke="#777" stroke-width="1"/><line x1="0" y1="10.5" x2="10" y2="10.5" stroke="#888" stroke-width="1"/></g><g transform="translate(79.00,299.10)"><line x1="0" y1="0.5" x2="11" y2="0.5" stroke="#777" stroke-width="1"/><line x1="0" y1="2.5" x2="7" y2="2.5" stroke="#888" stroke-width="1"/><line x1="0" y1="4.5" x2="11" y2="4.5" stroke="#777" stroke-width="1"/><line x1="0" y1="6.5" x2="9" y2="6.5" stroke="#999" stroke-width="1"/><line x1="0" y1="8.5" x2="11" y2="8.5" stroke="#777" stroke-width="1"/><line x1="0" y1="10.5" x2="10" y2="10.5" stroke="#888" stroke-width="1"/></g><g transform="translate(60.00,315.35)"><path d="M0.6,3.3 L3.9,0.3 V3.3 Z" fill="#3b3f43"/><path d="M0.6,3 V11.5 H2.2" fill="none" stroke="#3b3f43" stroke-width="0.9"/><path d="M3.8,0.5 H13 V2.5 M4.5,0.5 V11.5 H13 V9.5" fill="none" stroke="#3b3f43"/><path d="M12.2,2.5 L10.3,4.2 L8.7,3.9 L6,6.6 L9,9.6 L12,10" fill="none" stroke="#3b3f43" stroke-width="1"/></g><g transform="translate(79.00,334.75)"><path d="M0.5,0 V9 H10.5" fill="none" stroke="#3b3f43"/><path d="M10,1 L8,2.6 L6.5,2.4 L3.5,5.3 L6.5,8.3 L10,8.5" fill="none" stroke="#3b3f43"/></g><g transform="translate(98.00,353.00)"><path d="M0.5,0 V8.5 H11" fill="none" stroke="#3b3f43"/><path d="M4,8.5 V7 M6.5,8.5 V7 M9,8.5 V7" stroke="#3b3f43"/></g><g transform="translate(98.00,370.25)"><path d="M0.5,0 V8.5 H11" fill="none" stroke="#3b3f43"/><path d="M4,8.5 V7 M6.5,8.5 V7 M9,8.5 V7" stroke="#3b3f43"/></g><g transform="translate(98.00,387.50)"><path d="M0.5,0 V8.5 H11 M0.5,0.5 H2.2 M0.5,3 H2.2 M0.5,5.5 H2.2" fill="none" stroke="#3b3f43"/></g><g transform="translate(98.00,404.75)"><path d="M0.5,0 V8.5 H11 M0.5,0.5 H2.2 M0.5,3 H2.2 M0.5,5.5 H2.2" fill="none" stroke="#3b3f43"/></g><g transform="translate(98.00,422.00)"><path d="M1,2.8 H3 L5.2,7.3 L7.5,1.6 L9.2,7.3 L10.8,2 V7.5" fill="none" stroke="#4a4e52" stroke-width="1"/><circle cx="1" cy="2.8" r="1" fill="#3b3f43"/></g><g transform="translate(98.00,439.25)"><path d="M1,2.8 H3 L5.2,7.3 L7.5,1.6 L9.2,7.3 L10.8,2 V7.5" fill="none" stroke="#4a4e52" stroke-width="1"/><circle cx="1" cy="2.8" r="1" fill="#3b3f43"/></g><g transform="translate(98.00,456.50)"><path d="M1.5,0 V8.5 M0.3,0.5 H2.7 M0.3,8.5 H2.7" fill="none" stroke="#3b3f43"/><path d="M2.5,8.5 H11" fill="none" stroke="#6b6f73"/></g><path d="M30.5,88.8 V97.3 H40 M49.5,106.0 V321.6 M50,114.6 H58 M50,131.8 H58 M50,149.1 H58 M50,166.3 H58 M50,183.6 H58 M50,321.6 H58 M67.5,192.2 V304.4 M68,200.8 H77 M68,218.1 H77 M68,235.3 H77 M68,252.6 H77 M68,269.9 H77 M68,287.1 H77 M68,304.4 H77 M67.5,330.2 V338.9 H76 M85.5,347.5 V459.6 M86,356.1 H95 M86,373.4 H95 M86,390.6 H95 M86,407.9 H95 M86,425.1 H95 M86,442.4 H95 M86,459.6 H95" stroke="#cfd1d3" stroke-width="1" fill="none"/><path d="M48,113.1 L49.5,114.6 L48,116.1 M48,130.3 L49.5,131.8 L48,133.3 M48,147.6 L49.5,149.1 L48,150.6 M48,164.8 L49.5,166.3 L48,167.8 M29.0,96.5 L30.5,98.0 L32.0,96.5 M47.5,182.8 L49,184.3 L50.5,182.8 M47.5,320.8 L49,322.3 L50.5,320.8 M66.0,338.1 L67.5,339.6 L69.0,338.1" stroke="#8a8d90" stroke-width="0.8" fill="none"/><path d="M250,43.5 L254,47.5 L250,51.5 L246,47.5 Z" fill="none" stroke="#5a5e62" stroke-width="1"/><circle cx="267.8" cy="47.2" r="7.5" fill="#8a8d90"/><path d="M264.1,43.5 L271.5,50.9 M271.5,43.5 L264.1,50.9" stroke="#fff" stroke-width="1"/><rect x="265.5" y="63" width="7" height="7.6" fill="none" stroke="#6b6f73" stroke-width="0.8"/><rect x="265.2" y="62.7" width="7.6" height="1.4" fill="#4f5357"/><rect x="266" y="65" width="2" height="5.2" fill="#4f5357"/><path d="M269.5,67.5 H271.5 M270.5,66.5 V68.5" stroke="#8a8d90" stroke-width="0.7"/><rect x="28" y="511.5" width="242" height="3" rx="1.5" fill="#c8cacc"/><path d="M25.6,511.6 L24.3,513 L25.6,514.4 M272.8,511.6 L274.1,513 L272.8,514.4" stroke="#b0b2b4" stroke-width="0.7" fill="none"/><rect x="28" y="511.5" width="132" height="3" rx="1.5" fill="#6b6f73"/></svg>
<div class="a" style="left:20px;top:38px;width:259px;height:1px;background:#dcdee0"></div>
<div class="a" style="left:20.5px;top:38px;width:1px;height:479px;background:#dcdee0"></div>
<svg class="a" width="1024" height="532" style="left:0;top:0"><rect x="140.7" y="18.1" width="18.2" height="18.5" rx="1.5" fill="#d1d3d5"/><rect x="319.5" y="18.5" width="19" height="18" rx="1.5" fill="#f3f4f5" stroke="#a6d6ee" stroke-width="1"/><rect x="366.8" y="18.2" width="18.4" height="18.4" rx="1.5" fill="#e1e3e5"/><rect x="446.4" y="18.2" width="18.6" height="18.4" rx="1.5" fill="#d1d3d5"/><rect x="504.5" y="18.5" width="18" height="18" rx="1.5" fill="#eef2f5" stroke="#a8d6ee" stroke-width="1"/><rect x="530" y="18.1" width="17.8" height="18.4" rx="1.5" fill="#d1d3d5"/><line x1="98.5" y1="18.5" x2="98.5" y2="36.5" stroke="#d9dbdd" stroke-width="1"/><line x1="180.2" y1="18.5" x2="180.2" y2="36.5" stroke="#d9dbdd" stroke-width="1"/><line x1="278.5" y1="18.5" x2="278.5" y2="36.5" stroke="#d9dbdd" stroke-width="1"/><line x1="365.8" y1="18.5" x2="365.8" y2="36.5" stroke="#d9dbdd" stroke-width="1"/><path d="M5.5,33 V21.5 H11.3 L14.5,24.8 V33 Z" fill="none" stroke="#5a5e62" stroke-width="1"/><path d="M11.3,21.5 L14.5,24.8 H11.3 Z" fill="#31363b"/><rect x="24" y="24.5" width="10.8" height="8.5" rx="0.8" fill="none" stroke="#5a5e62"/><path d="M23.6,21.8 H28.5 L29.6,23 H35.2 V25.6 H23.6 Z" fill="#31363b"/><path d="M43.5,33 V21.5 H52 L54.5,24 V33 Z" fill="none" stroke="#b6b8ba"/><path d="M46.5,21.5 V24.8 H51 V21.5" fill="none" stroke="#b6b8ba"/><path d="M45.8,33 V28.5 H52.2 V33" fill="none" stroke="#b6b8ba"/><rect x="64.5" y="21.5" width="7" height="3" fill="#a9abad" stroke="#6b6f73" stroke-width="0.8"/><rect x="62.4" y="24.5" width="11.6" height="6.3" rx="1.2" fill="#eff0f1" stroke="#4f5357"/><rect x="63.5" y="28.6" width="9.5" height="1.8" fill="#31363b"/><rect x="65" y="30.5" width="6.5" height="2.8" fill="#a9abad"/><rect x="82.3" y="22.3" width="9.3" height="10.2" rx="1" fill="none" stroke="#4f5357"/><circle cx="87.3" cy="29" r="1.7" fill="none" stroke="#31363b" stroke-width="0.9"/><line x1="88.5" y1="30.2" x2="90.3" y2="32" stroke="#31363b" stroke-width="0.9"/><path d="M104.8,24.8 C109,23.6 113.5,25.5 113.5,29 C113.5,31.5 111.5,33 108.8,33.3" fill="none" stroke="#4f5357"/><path d="M107,22.2 L104.5,24.8 L107.3,27" fill="none" stroke="#4f5357"/><path d="M132,24.8 C127.8,23.6 123.3,25.5 123.3,29 C123.3,31.5 125.3,33 128,33.3" fill="none" stroke="#b6b8ba"/><path d="M129.8,22.2 L132.3,24.8 L129.5,27" fill="none" stroke="#b6b8ba"/><rect x="144.5" y="22" width="3" height="4" fill="none" stroke="#5a5e62" stroke-width="0.9"/><rect x="150.7" y="22" width="4.6" height="4" rx="0.8" fill="none" stroke="#5a5e62" stroke-width="0.9"/><path d="M146,26 V31 H151" fill="none" stroke="#5a5e62" stroke-width="0.9"/><line x1="147.5" y1="24" x2="150.7" y2="24" stroke="#5a5e62" stroke-width="0.9"/><rect x="151.1" y="28.9" width="4.5" height="4.3" fill="#31363b"/><rect x="163.5" y="22" width="4" height="4.5" fill="none" stroke="#5a5e62" stroke-width="0.9"/><rect x="163.3" y="28.8" width="4.4" height="4.3" fill="#31363b"/><path d="M169.5,22.7 H175 M169.5,24.7 H175 M169.5,29.6 H172.8 M169.5,32.2 H173" stroke="#8a8d90" stroke-width="0.9"/><path d="M188.5,22 C186,22 185.8,23 185.8,25 V30.5 C185.8,32.5 186.5,33 188.5,33" fill="none" stroke="#4f5357"/><path d="M188,22 H195.5 C196.5,22 196.8,23 196.8,24" fill="none" stroke="#4f5357"/><rect x="188.5" y="25.8" width="6" height="6.6" rx="1.5" fill="none" stroke="#4f5357"/><path d="M188.5,28 H194.5 M195,31.8 H198 M196.5,30.3 V33.3" stroke="#4f5357"/><rect x="204.5" y="22.5" width="11" height="10" fill="none" stroke="#4f5357" stroke-width="0.9"/><rect x="204.3" y="22.3" width="4.3" height="3.7" fill="#3daee9"/><path d="M204.5,25 H215.5 M204.5,27.5 H215.5 M204.5,30 H211 M208.6,22.5 V32.5" stroke="#4f5357" stroke-width="0.9"/><path d="M211.8,31.6 H215.6 M213.7,29.7 V33.5" stroke="#31363b"/><path d="M224.5,22 H223.5 V32.8 H224.5 M233.5,22 H234.5 V27" fill="none" stroke="#4f5357"/><rect x="225.3" y="22.8" width="3" height="3" fill="none" stroke="#3daee9" stroke-width="0.9"/><rect x="229.6" y="22.8" width="3" height="3" fill="none" stroke="#3daee9" stroke-width="0.9"/><rect x="225.3" y="27.2" width="3" height="3" fill="none" stroke="#3daee9" stroke-width="0.9"/><path d="M229.6,27.2 H232.6 V28.5 M229.6,27.2 V30.2 H231" fill="none" stroke="#3daee9" stroke-width="0.9"/><path d="M232,31.8 H235.3 M233.6,30.2 V33.3" stroke="#31363b"/><path d="M242.2,25.3 L245.3,22.2 V25.3 Z" fill="#4f5357"/><path d="M242.3,25 V32.6 H243.8" fill="none" stroke="#4f5357" stroke-width="0.9"/><path d="M245,22.3 H254.5 V24 M245.8,22.3 V32.6 H250" fill="none" stroke="#4f5357"/><path d="M253.5,24.3 L251.5,26 L250,25.7 L247.3,28.5 L250.3,31.5" fill="none" stroke="#4f5357"/><path d="M251,31.8 H255 M253,29.8 V33.6" stroke="#31363b"/><path d="M266.5,23 C265,26 262.8,28 262.8,30.3 C262.8,32 264.5,33 266.4,33 C268.3,33 270,32 270,30.3 C270,28 268,26 266.5,23 Z" fill="#4d5155"/><circle cx="271.3" cy="23.9" r="1.9" fill="#000"/><path d="M290,33 H285.5 C284.5,33 284.2,32.5 284.2,31.8 V22.5 C284.2,21.8 284.5,21.5 285.5,21.5 H292.7 C293.5,21.5 293.7,21.8 293.7,22.5 V30" fill="none" stroke="#8a8d90"/><path d="M293.7,29.5 V31.5 H289.5 M291,30 L289.3,31.5 L291,33" fill="none" stroke="#5a5e62"/><path d="M308,33 H312 C313,33 313.5,32.5 313.5,31.5 V22.8 C313.5,21.8 313,21.5 312,21.5 H304.5 C303.5,21.5 303.2,22 303.2,23 V28" fill="none" stroke="#8a8d90"/><path d="M303.3,27.5 V29.7 H307 M305.8,28.2 L307.3,29.7 L305.8,31.2" fill="none" stroke="#5a5e62"/><rect x="323.6" y="22.5" width="11.4" height="10.2" fill="#f4f5f6" stroke="#55595d" stroke-width="1"/><path d="M323.5,26.8 H327.3 L330.3,23.9 L334.8,22.6 M323.5,28.4 H327.3 L330.3,31.3 L334.8,32.6" fill="none" stroke="#4f5357" stroke-width="0.9"/><path d="M340.7,26.8 L341.8,27.8 L342.9,26.8" fill="none" stroke="#8a8d90" stroke-width="0.8"/><rect x="349.8" y="22.9" width="9.4" height="9.2" fill="none" stroke="#3b3f43" stroke-width="1"/><circle cx="349.8" cy="22.9" r="1" fill="#3b3f43"/><circle cx="359.2" cy="22.9" r="1" fill="#3b3f43"/><circle cx="349.8" cy="32.1" r="1" fill="#3b3f43"/><circle cx="359.2" cy="32.1" r="1" fill="#3b3f43"/><path d="M351.8,25.2 H357.2 M354.5,25.2 V30.5" stroke="#3b3f43" stroke-width="1.3"/><rect x="369.5" y="21.8" width="14" height="11.4" fill="#f8f8f9" stroke="#cfd1d3"/><line x1="376.5" y1="21.8" x2="376.5" y2="33.2" stroke="#cfd1d3"/><rect x="388.5" y="21.8" width="14" height="11.4" fill="#f8f8f9" stroke="#cfd1d3"/><line x1="388.5" y1="27.3" x2="402.5" y2="27.3" stroke="#cfd1d3"/><rect x="407.5" y="21.8" width="14" height="11.4" fill="#f8f8f9" stroke="#cfd1d3"/><path d="M414.5,21.8 V33.2 M407.5,27.3 H421.5" stroke="#cfd1d3"/><rect x="426.8" y="21.8" width="14.3" height="11.4" fill="#fbfbfb" stroke="#c3c5c7"/><path d="M434,21.8 V33.2 M426.8,27.3 H441" stroke="#c3c5c7"/><path d="M429.5,31.5 L437.5,24" stroke="#3b3f43" stroke-width="1.4"/><path d="M437,24.5 L438.5,23" stroke="#aaa" stroke-width="1.6"/><path d="M452.5,24.5 L459,28 L453.5,31.5 Z" fill="#2f3337"/><line x1="452.5" y1="22" x2="452.5" y2="23.3" stroke="#2f3337" stroke-width="0.9"/><path d="M475,21 C472,21 470.5,23 470.5,27 C470.5,31.5 472,35 475,35 C478,35 479.5,31.5 479.5,27 C479.5,23 478,21 475,21 Z" fill="#263238"/><path d="M475,22.5 V26" stroke="#1d99f3" stroke-width="1.2"/><path d="M489.5,24 V22.4 H491.5 M497,22.4 H499 V24 M499,30.5 V32.3 H497 M491.5,32.3 H489.5 V30.5" fill="none" stroke="#4f5357"/><rect x="491.5" y="24.4" width="5.5" height="5.9" fill="none" stroke="#4f5357"/><path d="M493.3,23.8 L494.3,22.8 L495.3,23.8 M493.3,30.9 L494.3,31.9 L495.3,30.9 M490.9,26.4 L489.9,27.4 L490.9,28.4 M497.6,26.4 L498.6,27.4 L497.6,28.4" fill="#4f5357" stroke="#4f5357" stroke-width="0.6"/><path d="M508.5,24 V22.4 H510.5 M516,22.4 H518 V24 M518,30.5 V32.3 H516 M510.5,32.3 H508.5 V30.5" fill="none" stroke="#9a9da0"/><rect x="510.5" y="24.4" width="5.5" height="5.9" fill="none" stroke="#9a9da0"/><path d="M512.3,23.8 L513.3,22.8 L514.3,23.8 M512.3,30.9 L513.3,31.9 L514.3,30.9" fill="#9a9da0" stroke="#9a9da0" stroke-width="0.6"/><path d="M525,26.8 L526,27.8 L527,26.8" fill="none" stroke="#93cee9" stroke-width="0.8"/><path d="M533.5,22.3 H535 M537,22.3 H538.5 M540.5,22.3 H542 M544,22.3 H545.5 M533.5,25 V26.5" stroke="#4f5357" stroke-width="1"/><rect x="533.5" y="28.3" width="4.8" height="3.8" fill="none" stroke="#4f5357"/><path d="M537.5,27.5 L541.5,23.5 M539.5,23.5 H541.5 V25.5" fill="none" stroke="#4f5357" stroke-width="0.9"/><text x="542" y="34" font-family="Liberation Sans" font-size="11.5" fill="#3daee9">1</text><path d="M550.8,26.8 L551.8,27.8 L552.8,26.8" fill="none" stroke="#8a8d90" stroke-width="0.8"/><rect x="1.4" y="39.1" width="17.5" height="17.5" rx="1.5" fill="#c9cbcd"/><path d="M7.6,45.3 L14,49.3 L8.4,53.2 Z" fill="#2f3337"/><line x1="7" y1="42.8" x2="7" y2="44.2" stroke="#2f3337" stroke-width="0.9"/><path d="M4.5,63.8 V61.8 H6.8 M13.2,61.8 H15.5 V63.8 M15.5,69.2 V71.2 H13.2 M6.8,71.2 H4.5 V69.2" fill="none" stroke="#4f5357"/><rect x="6.8" y="63.8" width="6.4" height="5.4" fill="none" stroke="#4f5357"/><path d="M9,63.2 L10,62.2 L11,63.2 M9,69.8 L10,70.8 L11,69.8 M6.2,65.5 L5.2,66.5 L6.2,67.5 M13.8,65.5 L14.8,66.5 L13.8,67.5" fill="#4f5357" stroke="#4f5357" stroke-width="0.6"/><rect x="6.5" y="83.5" width="7" height="5.6" fill="none" stroke="#4f5357"/><path d="M5.5,85.5 L4.5,86.3 L5.5,87.1 M14.5,85.5 L15.5,86.3 L14.5,87.1" fill="#4f5357" stroke="#4f5357" stroke-width="0.6"/><rect x="7" y="102" width="6" height="6.6" fill="none" stroke="#4f5357"/><path d="M10,100.3 V101.5 M10,109 V110.2" stroke="#4f5357"/><line x1="2" y1="116.1" x2="19" y2="116.1" stroke="#dcdee0"/><line x1="2" y1="271.7" x2="19" y2="271.7" stroke="#dcdee0"/><line x1="2" y1="313" x2="19" y2="313" stroke="#dcdee0"/><path d="M4.5,127 L6.5,126.5 L8.5,129.5 L11,124.5 L13,130.5 L15.5,124.5" fill="none" stroke="#3b3f43" stroke-width="1.1"/><circle cx="4.6" cy="126.7" r="1" fill="#3b3f43"/><path d="M10,141.5 L15.5,146 L10,150.5 L4.5,146 Z" fill="none" stroke="#3b3f43" stroke-width="1.1"/><path d="M7.5,146 C8.5,143 9.5,143 10,146 C10.5,149 11.5,149 12.5,146" fill="none" stroke="#3b3f43" stroke-width="0.8"/><rect x="2.8" y="159" width="15" height="12.6" fill="#2c3640" stroke="#b9884c" stroke-width="1"/><path d="M4.5,165.3 L10.6,160.2 L16.8,165.3" fill="none" stroke="#5d8fb8" stroke-width="0.8"/><path d="M4.5,165.3 L10.6,170.4 L16.8,165.3 M4.6,160 V171" fill="none" stroke="#7d8a96" stroke-width="0.7"/><path d="M3.5,165.3 H17.2" stroke="#c9d1d8" stroke-width="1"/><rect x="2.8" y="178" width="15" height="12.6" fill="#2c3640" stroke="#b9884c" stroke-width="1"/><path d="M4.5,184.3 L10.6,179.2 L16.8,184.3" fill="none" stroke="#5d8fb8" stroke-width="0.8"/><path d="M4.5,184.3 L10.6,189.4 L16.8,184.3 M4.6,179 V190" fill="none" stroke="#7d8a96" stroke-width="0.7"/><path d="M3.5,184.3 H17.2" stroke="#c9d1d8" stroke-width="1"/><rect x="2.8" y="216.4" width="15" height="12.6" fill="#2c3640" stroke="#b9884c" stroke-width="1"/><path d="M4.5,222.70000000000002 L10.6,217.6 L16.8,222.70000000000002" fill="none" stroke="#5d8fb8" stroke-width="0.8"/><path d="M4.5,222.70000000000002 L10.6,227.8 L16.8,222.70000000000002 M4.6,217.4 V228.4" fill="none" stroke="#7d8a96" stroke-width="0.7"/><path d="M3.5,222.70000000000002 H17.2" stroke="#c9d1d8" stroke-width="1"/><rect x="2.8" y="235.6" width="15" height="12.6" fill="#2c3640" stroke="#b9884c" stroke-width="1"/><path d="M4.5,241.9 L10.6,236.79999999999998 L16.8,241.9" fill="none" stroke="#5d8fb8" stroke-width="0.8"/><path d="M4.5,241.9 L10.6,247.0 L16.8,241.9 M4.6,236.6 V247.6" fill="none" stroke="#7d8a96" stroke-width="0.7"/><path d="M3.5,241.9 H17.2" stroke="#c9d1d8" stroke-width="1"/><path d="M4.5,204.2 H15.5" stroke="#3b3f43" stroke-width="0.9"/><rect x="10" y="200.7" width="1.5" height="1.5" fill="#3b3f43"/><rect x="13" y="200.7" width="1.5" height="1.5" fill="#3b3f43"/><rect x="8" y="206" width="1.5" height="1.5" fill="#3b3f43"/><rect x="11.5" y="206" width="1.5" height="1.5" fill="#3b3f43"/><path d="M6.3,202.8 L4.6,204.2 L6.3,205.6" stroke="#3b3f43" stroke-width="0.8" fill="none"/><path d="M6,256.5 H8 M7,256.5 V265.5 H15.5" fill="none" stroke="#3b3f43" stroke-width="1"/><path d="M7,265.5 H15.5" stroke="#8a8d90"/><path d="M6.5,277.5 V287 H15.5 M9,287 V285.5 M11.5,287 V285.5 M14,287 V285.5" fill="none" stroke="#3b3f43" stroke-width="1"/><path d="M6.5,296.8 V307.3 H15.5 M6.5,299 H8.5 M6.5,302 H8.5 M6.5,305 H8.5" fill="none" stroke="#3b3f43" stroke-width="1"/><path d="M5,321 V319.2 H7 M13,319.2 H15.2 V321 M15.2,327 V328.8 H13 M7,328.8 H5 V327" fill="none" stroke="#4f5357"/><rect x="7.3" y="321.2" width="5.6" height="5.6" fill="none" stroke="#4f5357"/><path d="M9.1,320.5 L10.1,319.4 L11.1,320.5 Z M9.1,327.5 L10.1,328.6 L11.1,327.5 Z M6.6,323 L5.5,324 L6.6,325 Z M13.6,323 L14.7,324 L13.6,325 Z" fill="#4f5357" stroke="#4f5357" stroke-width="0.5"/><path d="M5,340.6 V338.8 H7 M13,338.8 H15.2 V340.6 M15.2,346.6 V348.40000000000003 H13 M7,348.40000000000003 H5 V346.6" fill="none" stroke="#4f5357"/><rect x="7.3" y="340.8" width="5.6" height="5.6" fill="none" stroke="#4f5357"/><path d="M6.6,342.6 L5.5,343.6 L6.6,344.6 Z M13.6,342.6 L14.7,343.6 L13.6,344.6 Z" fill="#4f5357" stroke="#4f5357" stroke-width="0.5"/><path d="M5,358.7 V356.9 H7 M13,356.9 H15.2 V358.7 M15.2,364.7 V366.5 H13 M7,366.5 H5 V364.7" fill="none" stroke="#4f5357"/><rect x="7.3" y="358.9" width="5.6" height="5.6" fill="none" stroke="#4f5357"/><path d="M9.1,358.2 L10.1,357.09999999999997 L11.1,358.2 Z M9.1,365.2 L10.1,366.3 L11.1,365.2 Z" fill="#4f5357" stroke="#4f5357" stroke-width="0.5"/><rect x="4.8" y="376.4" width="1.3" height="1.3" fill="#3b3f43"/><rect x="8.3" y="376.4" width="1.3" height="1.3" fill="#3b3f43"/><rect x="11.2" y="376.4" width="1.3" height="1.3" fill="#3b3f43"/><rect x="14.0" y="376.4" width="1.3" height="1.3" fill="#3b3f43"/><rect x="4.8" y="379.9" width="1.3" height="1.3" fill="#3b3f43"/><rect x="14.0" y="379.9" width="1.3" height="1.3" fill="#3b3f43"/><rect x="10.9" y="385.7" width="1.3" height="1.3" fill="#3b3f43"/><rect x="14.0" y="385.7" width="1.3" height="1.3" fill="#3b3f43"/><rect x="5.5" y="383.5" width="2.8" height="2.8" fill="none" stroke="#3b3f43" stroke-width="1.2"/><path d="M9.8,382.3 L13,379.1 M10.8,379 H13.1 V381.3" fill="none" stroke="#3b3f43" stroke-width="1"/><path d="M5.2,399 V396.5 H15 V405.5 H11" fill="none" stroke="#3b3f43" stroke-width="1"/><rect x="4.8" y="402.4" width="1.3" height="1.3" fill="#3b3f43"/><rect x="7.8" y="402.4" width="1.3" height="1.3" fill="#3b3f43"/><rect x="4.8" y="404.9" width="1.3" height="1.3" fill="#3b3f43"/><rect x="7.8" y="404.9" width="1.3" height="1.3" fill="#3b3f43"/><path d="M12.8,398.3 L9.6,401.5 M9.6,399.3 V401.6 H11.9" fill="none" stroke="#3b3f43" stroke-width="1"/><rect x="4.6" y="414.4" width="1.3" height="1.3" fill="#3b3f43"/><rect x="8.0" y="414.4" width="1.3" height="1.3" fill="#3b3f43"/><rect x="4.6" y="417.9" width="1.3" height="1.3" fill="#3b3f43"/><rect x="10.9" y="424.4" width="1.3" height="1.3" fill="#3b3f43"/><rect x="14.4" y="421.4" width="1.3" height="1.3" fill="#3b3f43"/><rect x="14.4" y="424.4" width="1.3" height="1.3" fill="#3b3f43"/><rect x="5.3" y="422" width="3" height="3" fill="none" stroke="#3b3f43" stroke-width="1.2"/><path d="M11,416.6 H15 M13.3,414.9 L15,416.6 L13.3,418.3" fill="none" stroke="#3b3f43" stroke-width="1"/><rect x="4.6" y="433.9" width="1.3" height="1.3" fill="#3b3f43"/><rect x="8.0" y="433.9" width="1.3" height="1.3" fill="#3b3f43"/><rect x="4.6" y="436.7" width="1.3" height="1.3" fill="#3b3f43"/><rect x="8.0" y="436.7" width="1.3" height="1.3" fill="#3b3f43"/><path d="M11.3,434 H15 V443 H11.3" fill="none" stroke="#3b3f43" stroke-width="1"/><path d="M5,442.3 H9.8 M6.8,440.6 L5.1,442.3 L6.8,444" fill="none" stroke="#3b3f43" stroke-width="1"/><rect x="4.6" y="452.4" width="1.3" height="1.3" fill="#3b3f43"/><rect x="8.0" y="452.4" width="1.3" height="1.3" fill="#3b3f43"/><rect x="4.6" y="455.9" width="1.3" height="1.3" fill="#3b3f43"/><rect x="10.9" y="462.9" width="1.3" height="1.3" fill="#3b3f43"/><rect x="14.4" y="459.9" width="1.3" height="1.3" fill="#3b3f43"/><rect x="14.4" y="462.9" width="1.3" height="1.3" fill="#3b3f43"/><rect x="5.3" y="460.3" width="3" height="3" fill="none" stroke="#3b3f43" stroke-width="1.2"/><path d="M13.3,459.3 V453.2 M11.6,454.9 L13.3,453.2 L15,454.9" fill="none" stroke="#3b3f43" stroke-width="1"/><rect x="4.6" y="471.9" width="1.3" height="1.3" fill="#3b3f43"/><rect x="8.0" y="471.9" width="1.3" height="1.3" fill="#3b3f43"/><rect x="4.6" y="474.9" width="1.3" height="1.3" fill="#3b3f43"/><rect x="8.0" y="474.9" width="1.3" height="1.3" fill="#3b3f43"/><path d="M11.3,472 H15 V476.5 M5,478.3 V482.5 H9.6" fill="none" stroke="#3b3f43" stroke-width="1"/><path d="M13.3,478.3 V482.6 M11.6,480.9 L13.3,482.6 L15,480.9" fill="none" stroke="#3b3f43" stroke-width="1"/><path d="M8.8,507.4 L10.1,508.6 L11.4,507.4" fill="none" stroke="#6b6f73" stroke-width="0.8"/></svg>
</body></html>
